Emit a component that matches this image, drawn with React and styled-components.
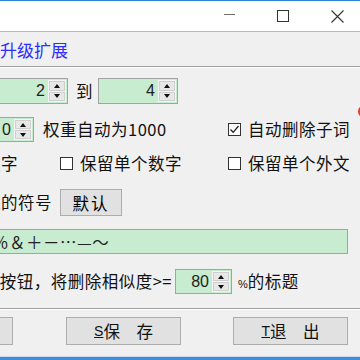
import React from 'react';
import styled, { createGlobalStyle } from 'styled-components';

const GlobalStyle = createGlobalStyle`
body {
    margin: 0;
    background: #f0f0f0;
    font-family: "Noto Sans CJK SC", "Liberation Sans", sans-serif;
}
`

const App = () => {
    return (<Window>
        <GlobalStyle />
        <TitleBar>
            <Control><MinLine /></Control>
            <Control><MaxBox /></Control>
            <Control>
                <svg width="13" height="13" viewBox="0 0 13 13">
                    <path d="M0.5 0.5 L12.5 12.5 M12.5 0.5 L0.5 12.5" stroke="#333" strokeWidth="1.1" />
                </svg>
            </Control>
        </TitleBar>
        <Header>
            <HeaderText>升级扩展</HeaderText>
        </Header>
        <Badge />
        <Body>
            <Row top={11} height={26}>
                <LeftCut width={68}>
                    <SpinBox width={100} value="2" />
                </LeftCut>
                <Label gap={8}>到</Label>
                <Spacer gap={5} />
                <SpinBox width={80} value="4" />
            </Row>
            <Row top={13} height={25}>
                <LeftCut width={34}>
                    <SpinBox width={60} value="0" />
                </LeftCut>
                <Label gap={9} width={185}>权重自动为1000</Label>
                <Check checked>自动删除子词</Check>
            </Row>
            <Row top={10} height={22}>
                <LeftCut width={18}>
                    <Label>单个数字</Label>
                </LeftCut>
                <Spacer gap={42} />
                <Check width={168}>保留单个数字</Check>
                <Check>保留单个外文</Check>
            </Row>
            <Row top={15} height={27}>
                <LeftCut width={52}>
                    <Label>删除的符号</Label>
                </LeftCut>
                <Spacer gap={8} />
                <SmallButton>默认</SmallButton>
            </Row>
            <Row top={13} height={25}>
                <Field>％＆＋－…—～</Field>
            </Row>
            <Row top={15} height={25}>
                <LeftCut width={172}>
                    <Label>如果点击此按钮，将删除相似度&gt;=</Label>
                </LeftCut>
                <Spacer gap={3} />
                <SpinBox width={57} value="80" />
                <Label gap={6}><Narrow>%</Narrow>的标题</Label>
            </Row>
            <Separator />
            <Row top={8} height={28}>
                <LeftCut width={13}>
                    <DialogButton>确　定</DialogButton>
                </LeftCut>
                <Spacer gap={53} />
                <DialogButton><u>S</u>保　存</DialogButton>
                <Spacer gap={52} />
                <DialogButton><u>T</u>退　出</DialogButton>
            </Row>
        </Body>
        <BottomEdge />
    </Window>
    )
}

const SpinBox = ({ width, value }) => {
    return (<SpinFrame width={width}>
        <SpinValue>{value}</SpinValue>
        <SpinButtons>
            <SpinButton><ArrowUp /></SpinButton>
            <SpinButton><ArrowDown /></SpinButton>
        </SpinButtons>
    </SpinFrame>)
}

const Check = ({ checked, width, children }) => {
    return (<CheckWrap width={width}>
        <CheckBox>
            {checked && <svg width="11" height="11" viewBox="0 0 11 11">
                <path d="M1.5 5.5 L4.2 8.3 L9.5 2" stroke="#222" strokeWidth="1.3" fill="none" />
            </svg>}
        </CheckBox>
        <Label gap={7}>{children}</Label>
    </CheckWrap>)
}

export default App;

const Window = styled.div`
position: relative;
width: 360px;
height: 360px;
overflow: hidden;
background: #f0f0f0;
border-top: 1px solid #2b84d6;
box-sizing: border-box;
`
const TitleBar = styled.div`
height: 30px;
background: #ffffff;
display: flex;
justify-content: flex-end;
margin-right: -4px;
border-bottom: 1px solid #b9b9b9;
`
const Control = styled.div`
width: 54px;
display: flex;
align-items: center;
justify-content: center;
`
const MinLine = styled.div`
width: 11px;
height: 1px;
background: #6d6d6d;
margin-bottom: 3px;
`
const MaxBox = styled.div`
width: 10px;
height: 10px;
border: 1px solid #333;
`
const Header = styled.div`
height: 34px;
display: flex;
align-items: center;
border-bottom: 1px solid #a0a0a0;
box-shadow: 0 1px 0 #ffffff;
`
const HeaderText = styled.div`
color: #2e2eff;
font-size: 17px;
line-height: 1;
margin-top: 1px;
`
const Badge = styled.div`
position: absolute;
right: -11px;
top: 104px;
width: 13px;
height: 13px;
border-radius: 50%;
background: #e2383a;
`
const Body = styled.div`
display: flex;
flex-direction: column;
`
const Row = styled.div`
display: flex;
align-items: center;
margin-top: ${p => p.top}px;
height: ${p => p.height}px;
`
const LeftCut = styled.div`
width: ${p => p.width}px;
flex-shrink: 0;
height: 100%;
display: flex;
align-items: center;
justify-content: flex-end;
`
const Spacer = styled.div`
width: ${p => p.gap}px;
flex-shrink: 0;
`
const Label = styled.div`
font-size: 16.5px;
line-height: 1;
letter-spacing: 0.5px;
color: #111;
white-space: nowrap;
flex-shrink: 0;
margin-left: ${p => p.gap || 0}px;
${p => p.width ? `width: ${p.width}px;` : ''}
`
const Narrow = styled.span`
font-family: "Liberation Sans", sans-serif;
font-size: 11px;
letter-spacing: -1px;
margin-right: 1px;
`
const SpinFrame = styled.div`
width: ${p => p.width}px;
height: 100%;
flex-shrink: 0;
box-sizing: border-box;
border: 1px solid #a3a3a3;
background: #c8ecd0;
display: flex;
padding: 1px;
`
const SpinValue = styled.div`
flex: 1;
display: flex;
align-items: center;
justify-content: flex-end;
padding-right: 3px;
font-family: "Liberation Sans", sans-serif;
font-size: 16px;
color: #222;
`
const SpinButtons = styled.div`
width: 18px;
display: flex;
flex-direction: column;
gap: 1px;
background: #f4f4f4;
padding: 1px;
box-sizing: border-box;
`
const SpinButton = styled.div`
flex: 1;
background: #e7e7e7;
border: 1px solid #cfcfcf;
display: flex;
align-items: center;
justify-content: center;
`
const ArrowUp = styled.div`
width: 0;
height: 0;
border-left: 3.5px solid transparent;
border-right: 3.5px solid transparent;
border-bottom: 4px solid #111;
`
const ArrowDown = styled.div`
width: 0;
height: 0;
border-left: 3.5px solid transparent;
border-right: 3.5px solid transparent;
border-top: 4px solid #111;
`
const CheckWrap = styled.div`
display: flex;
align-items: center;
flex-shrink: 0;
${p => p.width ? `width: ${p.width}px;` : ''}
`
const CheckBox = styled.div`
width: 13px;
height: 13px;
box-sizing: border-box;
border: 1px solid #333;
background: #fff;
display: flex;
align-items: center;
justify-content: center;
`
const SmallButton = styled.div`
width: 62px;
height: 100%;
box-sizing: border-box;
border: 1px solid #adadad;
background: #e1e1e1;
display: flex;
align-items: center;
justify-content: center;
font-size: 16.5px;
letter-spacing: 2px;
flex-shrink: 0;
`
const Field = styled.div`
margin-left: -2px;
width: 350px;
height: 100%;
box-sizing: border-box;
border: 1px solid #a3a3a3;
background: #c8ecd0;
display: flex;
align-items: center;
overflow: hidden;
white-space: nowrap;
font-size: 16.5px;
letter-spacing: 0.5px;
text-indent: -7px;
color: #222;
`
const Separator = styled.div`
margin-top: 14px;
height: 1px;
background: #a0a0a0;
box-shadow: 0 1px 0 #ffffff;
`
const DialogButton = styled.div`
width: 115px;
height: 100%;
flex-shrink: 0;
box-sizing: border-box;
border: 1px solid #adadad;
background: #e1e1e1;
display: flex;
align-items: center;
justify-content: center;
font-size: 16.5px;
color: #111;
u {
    font-family: "Liberation Sans", sans-serif;
    font-size: 14px;
}
`
const BottomEdge = styled.div`
position: absolute;
left: 0;
right: 0;
bottom: 0;
height: 3px;
background: #3d8ddc;
border-top: 1px solid #c8d8ea;
`
